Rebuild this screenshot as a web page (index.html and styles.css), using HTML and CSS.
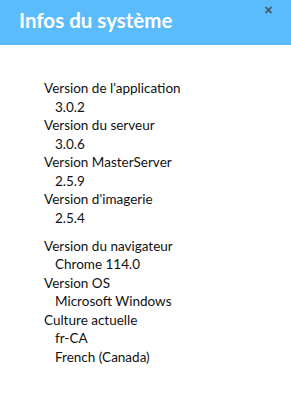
FILE: index.html
```html
<!DOCTYPE html>
<html>
<head>
    <meta charset="utf-8">
    <title>Infos du système</title>
    <link rel="stylesheet" href="styles.css">
</head>
<body>
    <div class="dialog">
        <div class="dialog-header">
            <h2>Infos du système</h2>
            <span class="close">&#x2715;</span>
        </div>
        <div class="dialog-body">
            <dl class="info-group">
                <dt>Version de l'application</dt>
                <dd>3.0.2</dd>
                <dt>Version du serveur</dt>
                <dd>3.0.6</dd>
                <dt>Version MasterServer</dt>
                <dd>2.5.9</dd>
                <dt>Version d'imagerie</dt>
                <dd>2.5.4</dd>
            </dl>
            <dl class="info-group">
                <dt>Version du navigateur</dt>
                <dd>Chrome 114.0</dd>
                <dt>Version OS</dt>
                <dd>Microsoft Windows</dd>
                <dt>Culture actuelle</dt>
                <dd>fr-CA</dd>
                <dd>French (Canada)</dd>
            </dl>
        </div>
    </div>
</body>
</html>
```

FILE: styles.css
```css
*, *::before, *::after { padding: 0; margin: 0; box-sizing: border-box; }
body { font-family: 'Lato', 'Open Sans', sans-serif; background: #fff; color: #111; }
.dialog { width: 291px; }
.dialog-header { height: 45px; background: #5bbcfb; position: relative; padding: 7px 0 0 19px; }
.dialog-header h2 { color: #fff; font-size: 20.5px; font-weight: bold; line-height: 26px; }
.close { position: absolute; top: 3px; right: 18px; font-size: 11px; color: #4a5560; font-weight: bold; }
.dialog-body { padding: 34px 0 0 44px; }
.info-group { margin-bottom: 9.5px; }
.info-group dt, .info-group dd { font-size: 13.5px; line-height: 18.5px; }
.info-group dd { margin-left: 11px; }
```
